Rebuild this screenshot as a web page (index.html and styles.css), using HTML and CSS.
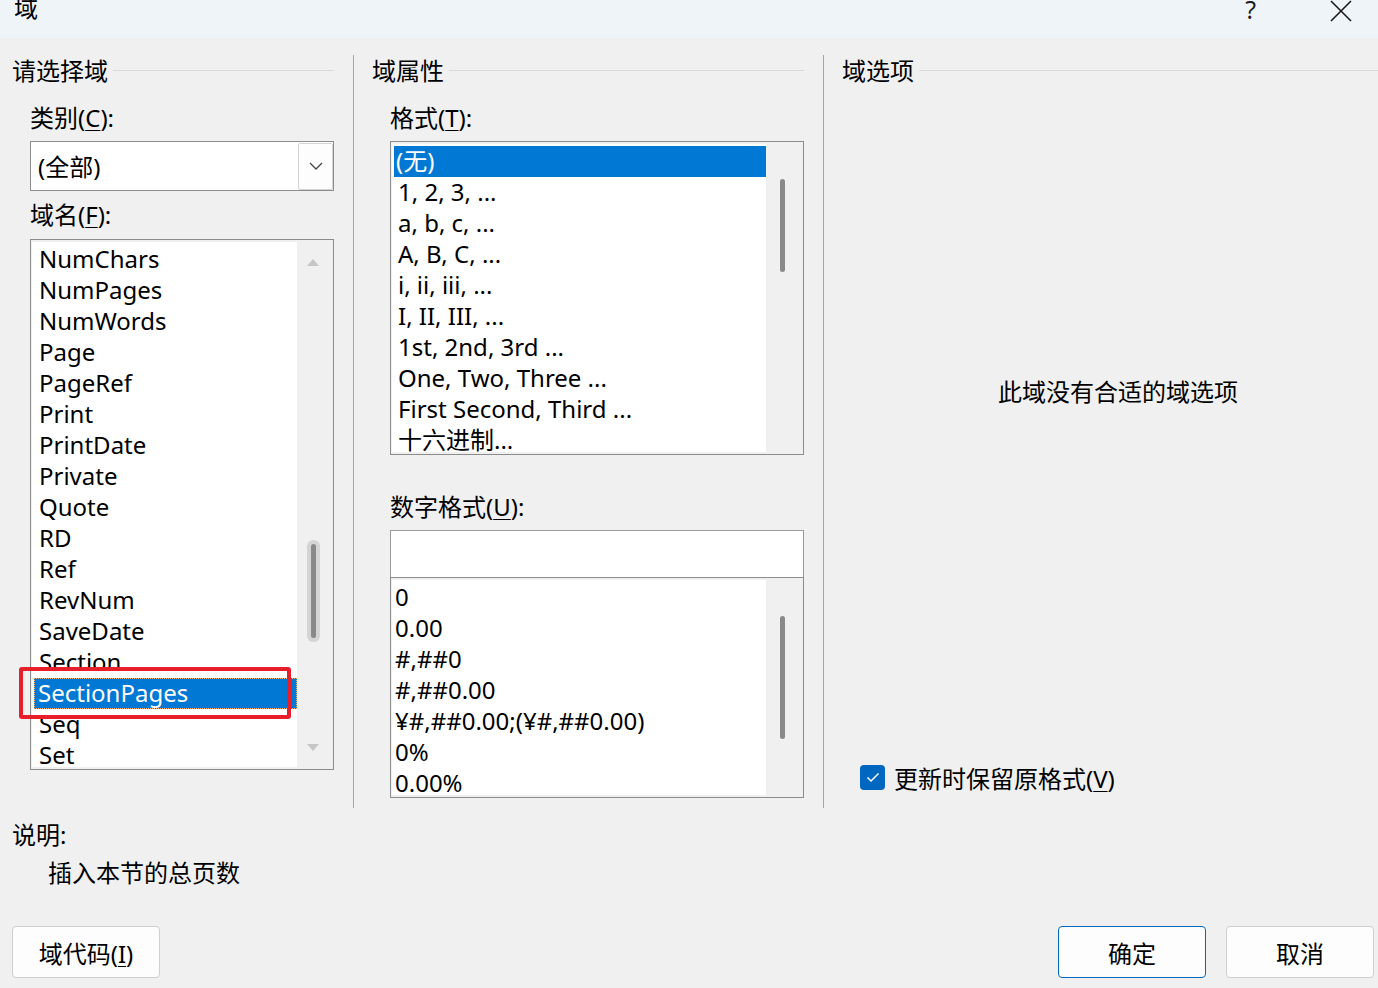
FILE: index.html
```html
<!DOCTYPE html>
<html lang="zh-CN">
<head>
<meta charset="utf-8">
<title>域</title>
<link rel="stylesheet" href="styles.css">
</head>
<body>
<div class="dialog">
  <div class="titlebar">
    <span class="title">域</span>
    <span class="help">?</span>
    <span class="close">
      <svg width="22" height="22" viewBox="0 0 22 22"><path d="M1 1 L21 21 M21 1 L1 21" stroke="#1a1a1a" stroke-width="1.6" fill="none"/></svg>
    </span>
  </div>

  <div class="cols">
    <div class="col col1">
      <div class="grp-head"><span>请选择域</span><i class="rule"></i></div>
      <div class="inner">
        <div class="label">类别(<u>C</u>):</div>
        <div class="combo">
          <span class="combo-text">(全部)</span>
          <span class="combo-btn">
            <svg width="14" height="8" viewBox="0 0 14 8"><path d="M1 1 L7 7 L13 1" stroke="#444" stroke-width="1.3" fill="none"/></svg>
          </span>
        </div>
        <div class="label label2">域名(<u>F</u>):</div>
        <div class="listbox names">
          <div class="list-area">
            <div class="item">NumChars</div>
            <div class="item">NumPages</div>
            <div class="item">NumWords</div>
            <div class="item">Page</div>
            <div class="item">PageRef</div>
            <div class="item">Print</div>
            <div class="item">PrintDate</div>
            <div class="item">Private</div>
            <div class="item">Quote</div>
            <div class="item">RD</div>
            <div class="item">Ref</div>
            <div class="item">RevNum</div>
            <div class="item">SaveDate</div>
            <div class="item">Section</div>
            <div class="item sel focus">SectionPages</div>
            <div class="item">Seq</div>
            <div class="item">Set</div>
          </div>
          <div class="vscroll">
            <span class="arrow up"></span>
            <span class="thumb hover names-thumb"></span>
            <span class="arrow down"></span>
          </div>
        </div>
      </div>
    </div>

    <div class="sep"></div>

    <div class="col col2">
      <div class="grp-head"><span>域属性</span><i class="rule"></i></div>
      <div class="inner">
        <div class="label">格式(<u>T</u>):</div>
        <div class="listbox formats">
          <div class="list-area">
            <div class="item sel">(无)</div>
            <div class="item">1, 2, 3, ...</div>
            <div class="item">a, b, c, ...</div>
            <div class="item">A, B, C, ...</div>
            <div class="item">i, ii, iii, ...</div>
            <div class="item">I, II, III, ...</div>
            <div class="item">1st, 2nd, 3rd ...</div>
            <div class="item">One, Two, Three ...</div>
            <div class="item">First Second, Third ...</div>
            <div class="item">十六进制...</div>
          </div>
          <div class="vscroll">
            <span class="thumb formats-thumb"></span>
          </div>
        </div>
        <div class="label label3">数字格式(<u>U</u>):</div>
        <div class="textbox"></div>
        <div class="listbox numbers">
          <div class="list-area">
            <div class="item">0</div>
            <div class="item">0.00</div>
            <div class="item">#,##0</div>
            <div class="item">#,##0.00</div>
            <div class="item">¥#,##0.00;(¥#,##0.00)</div>
            <div class="item">0%</div>
            <div class="item">0.00%</div>
          </div>
          <div class="vscroll">
            <span class="thumb numbers-thumb"></span>
          </div>
        </div>
      </div>
    </div>

    <div class="sep"></div>

    <div class="col col3">
      <div class="grp-head"><span>域选项</span><i class="rule"></i></div>
      <div class="no-opts">此域没有合适的域选项</div>
      <label class="check">
        <span class="box">
          <svg width="14" height="11" viewBox="0 0 14 11"><path d="M1.5 5.5 L5 9 L12.5 1.5" stroke="#fff" stroke-width="1.5" fill="none"/></svg>
        </span>
        <span>更新时保留原格式(<u>V</u>)</span>
      </label>
    </div>
  </div>

  <div class="desc">
    <div class="desc-label">说明:</div>
    <div class="desc-text">插入本节的总页数</div>
  </div>

  <div class="buttons">
    <button class="btn">域代码(<u>I</u>)</button>
    <span class="spacer"></span>
    <button class="btn primary">确定</button>
    <button class="btn">取消</button>
  </div>

  <div class="annot"></div>
</div>
</body>
</html>
```

FILE: styles.css
```css
html, body {
  margin: 0;
  padding: 0;
}
body {
  width: 1378px;
  height: 988px;
  overflow: hidden;
  background: #f0f0f0;
  font-family: "Noto Sans", "Noto Sans CJK SC", sans-serif;
  font-size: 24px;
  color: #000;
}
.dialog {
  position: relative;
  width: 1378px;
  height: 988px;
}
u { text-decoration-thickness: 1px; text-underline-offset: 3px; }

.titlebar {
  height: 38px;
  background: #eff4f9;
  display: flex;
  align-items: flex-start;
  position: relative;
  overflow: hidden;
}
.title {
  margin-left: 14px;
  margin-top: -8px;
  line-height: 32px;
  font-size: 24px;
}
.help {
  margin-left: auto;
  margin-top: -7px;
  line-height: 32px;
  font-size: 25px;
  color: #1a1a1a;
}
.close {
  margin-left: 74px;
  margin-right: 26px;
  margin-top: 0;
  display: flex;
}

.cols {
  display: flex;
  margin-top: 17px;
  height: 753px;
  padding-left: 12px;
}
.col1 { width: 322px; }
.col2 { width: 432px; }
.col3 { flex: 1; }
.sep {
  width: 1px;
  background: #a6a6a6;
  margin: 0 18px 0 19px;
}
.grp-head {
  display: flex;
  align-items: center;
  height: 28px;
  margin-top: 2px;
  line-height: 28px;
}
.rule {
  flex: 1;
  height: 1px;
  background: #dadada;
  margin-left: 5px;
  margin-top: -1px;
}
.inner { padding-left: 18px; }
.label {
  margin-top: 20px;
  height: 28px;
  line-height: 26px;
}
.label2 { margin-top: 11px; }
.label3 { margin-top: 39px; }

.combo {
  margin-top: 8px;
  height: 48px;
  border: 1px solid #8c8c8c;
  background: #fff;
  display: flex;
  align-items: center;
}
.combo-text {
  flex: 1;
  padding-left: 7px;
  line-height: 30px;
  margin-top: 2px;
}
.combo-btn {
  width: 33px;
  height: 45px;
  border: 1px solid #d4d4d4;
  border-radius: 2px;
  background: #fdfdfd;
  display: flex;
  align-items: center;
  justify-content: center;
}

.listbox {
  border: 1px solid #8c8c8c;
  background: #f0f0f0;
  padding: 2px 0 2px 1px;
  display: flex;
  overflow: hidden;
  box-sizing: border-box;
}
.list-area {
  background: #fff;
  overflow: hidden;
  padding: 2px 0 0 2px;
}
.item {
  height: 29px;
  line-height: 29px;
  padding-bottom: 2px;
  padding-left: 5px;
  white-space: nowrap;
}
.item.sel {
  background: #0078d4;
  color: #fff;
  padding-left: 2px;
}
.item.focus {
  outline: 1px dotted #f7b27a;
  outline-offset: -1px;
}
.vscroll {
  flex: 1;
  position: relative;
}
.thumb {
  position: absolute;
  width: 5px;
  border-radius: 3px;
  background: #898989;
}
.thumb.hover {
  box-shadow: 0 0 0 4px #d4d4d4;
}
.arrow {
  position: absolute;
  left: 10px;
  width: 0;
  height: 0;
  border-left: 6px solid transparent;
  border-right: 6px solid transparent;
}
.arrow.up { top: 17px; border-bottom: 7px solid #c6c6c6; }
.arrow.down { bottom: 16px; border-top: 7px solid #c6c6c6; }

.names {
  margin-top: 9px;
  height: 531px;
}
.names .list-area { width: 263px; }
.names .item { padding-left: 5px; }
.names .item.sel { padding-left: 4px; }
.names-thumb { left: 14px; top: 302px; height: 94px; }

.formats {
  margin-top: 8px;
  height: 314px;
}
.formats .list-area { width: 372px; }
.formats .item { padding-left: 4px; }
.formats .item.sel { padding-left: 2px; }
.formats-thumb { left: 14px; top: 35px; height: 93px; }

.textbox {
  margin-top: 8px;
  height: 46px;
  border: 1px solid #9a9a9a;
  background: #fff;
}
.numbers {
  margin-top: -1px;
  height: 221px;
}
.numbers .list-area { width: 372px; padding-left: 2px; }
.numbers .item { padding-left: 1px; }
.numbers-thumb { left: 14px; top: 36px; height: 123px; }

.no-opts {
  margin-top: 292px;
  margin-left: 156px;
  line-height: 30px;
  height: 30px;
}
.check {
  display: flex;
  align-items: center;
  margin-top: 355px;
  margin-left: 18px;
  height: 30px;
}
.box {
  width: 25px;
  height: 25px;
  border-radius: 4px;
  background: #0067c0;
  display: flex;
  align-items: center;
  justify-content: center;
  margin-right: 9px;
  margin-top: 1px;
}

.desc {
  padding-left: 12px;
}
.desc-label {
  margin-top: 12px;
  line-height: 30px;
  height: 30px;
}
.desc-text {
  margin-top: 8px;
  margin-left: 36px;
  line-height: 30px;
  height: 30px;
}
.buttons {
  display: flex;
  padding: 0 4px 0 12px;
  margin-top: 38px;
  gap: 20px;
}
.spacer { flex: 1; }
.btn {
  width: 148px;
  height: 52px;
  border: 1px solid #cfcfcf;
  border-radius: 4px;
  background: #fdfdfd;
  font-family: "Noto Sans", "Noto Sans CJK SC", sans-serif;
  font-size: 24px;
  color: #000;
  padding: 0;
}
.btn.primary {
  border-color: #0067c0;
}
.annot {
  position: absolute;
  left: 19px;
  top: 667px;
  width: 264px;
  height: 44px;
  border: 4px solid #e81f2b;
  border-radius: 3px;
}
```
